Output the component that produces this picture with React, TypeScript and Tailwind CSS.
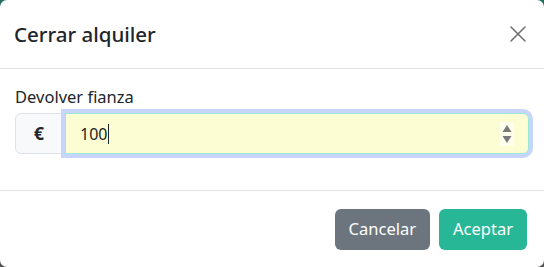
import { X } from "lucide-react";

export default function App() {
  return (
    <div className="w-[544px] h-[267px] bg-gradient-to-b from-[#1f6f5e] to-[#555] font-['Noto_Sans',sans-serif] text-[#212529]">
      <div className="flex h-full flex-col rounded-[7px] bg-white">
        <div className="flex h-[69px] items-center justify-between border-b border-[#dee2e6] pl-[14px] pr-[12px]">
          <h5 className="text-[20.5px] font-medium leading-none">Cerrar alquiler</h5>
          <button className="flex h-[28px] w-[28px] items-center justify-center text-[#707070]">
            <X className="h-[28px] w-[28px]" strokeWidth={1.3} />
          </button>
        </div>

        <div className="px-[15px] pt-[16px] pb-[36px]">
          <label className="mb-[4px] block text-[16.5px] leading-[24px]">Devolver fianza</label>
          <div className="flex h-[41px]">
            <span className="flex w-[48px] items-center justify-center rounded-l-[6px] border border-[#dee2e6] bg-[#f8f9fa] text-[18px] font-bold">
              €
            </span>
            <div className="relative ml-[2px] flex flex-1 items-center rounded-r-[6px] border border-[#9be8d8] bg-[#fcfdd2] pl-[14px] text-[16px] shadow-[0_0_0_4px_#c8d5fb]">
              <span>100</span>
              <span className="ml-px h-[20px] w-px bg-[#212529]" />
              <svg
                className="absolute right-[14px] top-[8px]"
                width="14"
                height="24"
                viewBox="0 0 14 24"
              >
                <rect width="14" height="24" fill="#fff" opacity="0.6" />
                <path d="M7 3 L11.5 10 L2.5 10 Z" fill="#7a7a7a" />
                <path d="M7 21 L11.5 14 L2.5 14 Z" fill="#7a7a7a" />
              </svg>
            </div>
          </div>
        </div>

        <div className="flex flex-1 items-center justify-end gap-[9px] border-t border-[#dee2e6] pr-[17px]">
          <button className="h-[41px] rounded-[6px] bg-[#6c757d] px-[14px] text-[16.5px] text-white">
            Cancelar
          </button>
          <button className="h-[41px] rounded-[6px] bg-[#27b796] px-[14px] text-[16.5px] text-white">
            Aceptar
          </button>
        </div>
      </div>
    </div>
  );
}
